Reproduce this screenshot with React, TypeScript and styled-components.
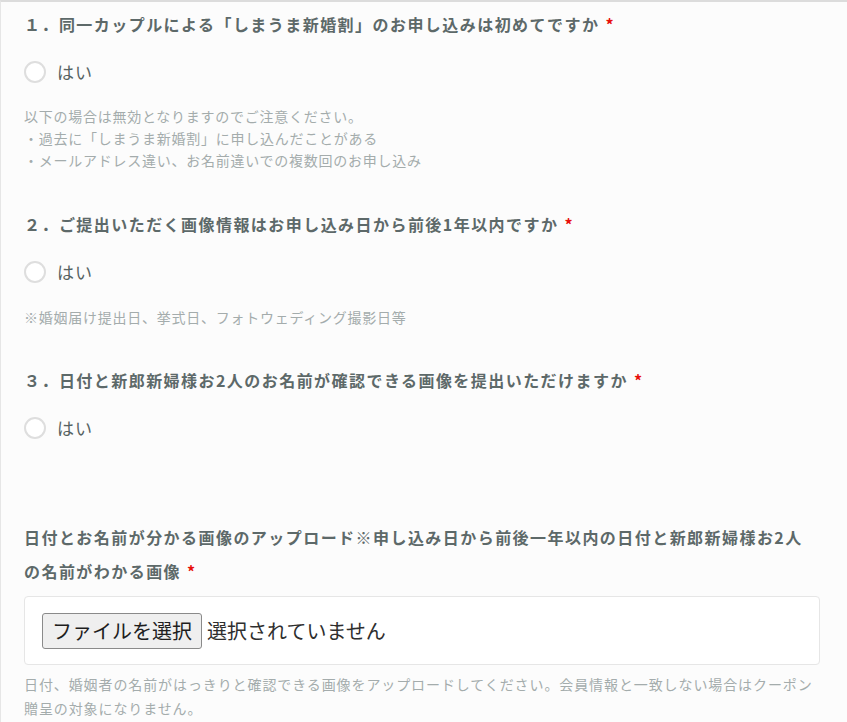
import React from "react";
import styled, { createGlobalStyle } from "styled-components";

const GlobalStyle = createGlobalStyle`
  html, body {
    margin: 0;
    padding: 0;
    background: #fcfcfc;
  }
  body {
    font-family: "Noto Sans CJK JP", "Noto Sans", sans-serif;
  }
  * { box-sizing: border-box; }
`;

const Page = styled.div`
  min-height: 722px;
  border-top: 2px solid #dcdcdc;
  border-left: 1px solid #e6e6e6;
  padding: 10px 27px 0 23px;
`;

const Question = styled.section<{ $gapTop?: number }>`
  margin-top: ${(p) => p.$gapTop ?? 0}px;
`;

const Title = styled.h2<{ $lh?: number; $inset?: number }>`
  margin: 0;
  padding-right: ${(p) => p.$inset ?? 0}px;
  font-size: 16px;
  font-weight: 700;
  line-height: ${(p) => p.$lh ?? 24}px;
  letter-spacing: 1.45px;
  color: #5d6969;
`;

const Required = styled.span`
  display: inline-block;
  line-height: 1;
  color: #e8100c;
  margin-left: 6px;
`;

const RadioRow = styled.label`
  display: flex;
  align-items: center;
  gap: 11px;
  margin-top: 24px;
  height: 24px;
  cursor: pointer;
`;

const RadioCircle = styled.span`
  width: 22px;
  height: 22px;
  border-radius: 50%;
  border: 2px solid #dedede;
  background: #ffffff;
  flex: none;
`;

const RadioText = styled.span`
  font-size: 17px;
  color: #566262;
  letter-spacing: 1px;
  line-height: 24px;
`;

const Note = styled.p<{ $top?: number }>`
  margin: ${(p) => p.$top ?? 21}px 0 0;
  font-size: 14px;
  line-height: 22px;
  letter-spacing: 0.75px;
  color: #a4acac;
`;

const UploadBox = styled.div`
  margin-top: 8px;
  background: #ffffff;
  border: 1px solid #e6e6e6;
  border-radius: 4px;
  padding: 16px 17px 15px;
  display: flex;
  align-items: center;
  gap: 5px;
`;

const FileButton = styled.button`
  font-family: "Noto Sans CJK JP", "Noto Sans", sans-serif;
  font-size: 20px;
  line-height: 34px;
  height: 36px;
  padding: 0 9px;
  background: #efefef;
  color: #1e1e1e;
  border: 1px solid #8a8a8a;
  border-radius: 3px;
  cursor: pointer;
`;

const FileStatus = styled.span`
  font-size: 20px;
  line-height: 36px;
  color: #2e2e2e;
`;

const Hint = styled.p`
  margin: 7px 0 0;
  font-size: 14px;
  line-height: 24px;
  letter-spacing: 0.9px;
  color: #a4acac;
`;

export default function App() {
  return (
    <>
      <GlobalStyle />
      <Page>
        <Question>
          <Title>
            １．同一カップルによる「しまうま新婚割」のお申し込みは初めてですか
            <Required>*</Required>
          </Title>
          <RadioRow>
            <RadioCircle />
            <RadioText>はい</RadioText>
          </RadioRow>
          <Note>
            以下の場合は無効となりますのでご注意ください。
            <br />
            ・過去に「しまうま新婚割」に申し込んだことがある
            <br />
            ・メールアドレス違い、お名前違いでの複数回のお申し込み
          </Note>
        </Question>

        <Question $gapTop={41}>
          <Title>
            ２．ご提出いただく画像情報はお申し込み日から前後1年以内ですか
            <Required>*</Required>
          </Title>
          <RadioRow>
            <RadioCircle />
            <RadioText>はい</RadioText>
          </RadioRow>
          <Note $top={22}>※婚姻届け提出日、挙式日、フォトウェディング撮影日等</Note>
        </Question>

        <Question $gapTop={40}>
          <Title>
            ３．日付と新郎新婦様お2人のお名前が確認できる画像を提出いただけますか
            <Required>*</Required>
          </Title>
          <RadioRow>
            <RadioCircle />
            <RadioText>はい</RadioText>
          </RadioRow>
        </Question>

        <Question $gapTop={80}>
          <Title $lh={34} $inset={12}>
            日付とお名前が分かる画像のアップロード※申し込み日から前後一年以内の日付と新郎新婦様お2人の名前がわかる画像
            <Required>*</Required>
          </Title>
          <UploadBox>
            <FileButton type="button">ファイルを選択</FileButton>
            <FileStatus>選択されていません</FileStatus>
          </UploadBox>
          <Hint>
            日付、婚姻者の名前がはっきりと確認できる画像をアップロードしてください。会員情報と一致しない場合はクーポン贈呈の対象になりません。
          </Hint>
        </Question>
      </Page>
    </>
  );
}
